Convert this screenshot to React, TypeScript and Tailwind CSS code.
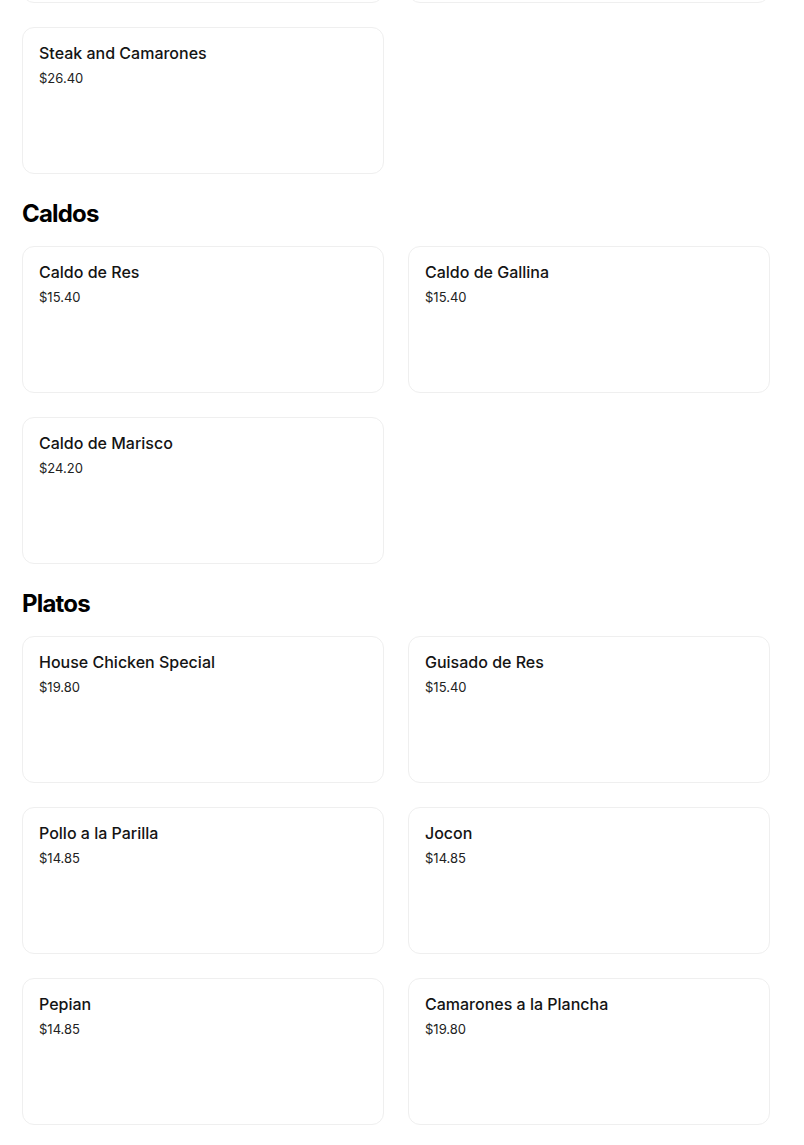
import React from 'react';

interface MenuItem {
  name: string;
  price: string;
}

interface Section {
  title: string;
  items: MenuItem[];
}

const sections: Section[] = [
  {
    title: 'Caldos',
    items: [
      { name: 'Caldo de Res', price: '$15.40' },
      { name: 'Caldo de Gallina', price: '$15.40' },
      { name: 'Caldo de Marisco', price: '$24.20' },
    ],
  },
  {
    title: 'Platos',
    items: [
      { name: 'House Chicken Special', price: '$19.80' },
      { name: 'Guisado de Res', price: '$15.40' },
      { name: 'Pollo a la Parilla', price: '$14.85' },
      { name: 'Jocon', price: '$14.85' },
      { name: 'Pepian', price: '$14.85' },
      { name: 'Camarones a la Plancha', price: '$19.80' },
    ],
  },
];

const cardClass = 'h-[147px] rounded-xl border border-[#efefef] bg-white px-4 pt-[15px]';

function ItemCard({ item }: { item: MenuItem }) {
  return (
    <div className={cardClass}>
      <h3 className="text-base leading-5 font-medium text-[#141414]">{item.name}</h3>
      <p className="mt-[5px] text-[13px] leading-5 text-[#222]">{item.price}</p>
    </div>
  );
}

export default function App() {
  return (
    <div
      className="h-[1145px] overflow-hidden bg-white px-[22px]"
      style={{ fontFamily: 'Inter, "Noto Sans", sans-serif' }}
    >
      {/* tail of the previous section, scrolled mostly out of view */}
      <div className="-mt-[144px] grid w-[748px] grid-cols-2 gap-6">
        <div className={cardClass} />
        <div className={cardClass} />
        <ItemCard item={{ name: 'Steak and Camarones', price: '$26.40' }} />
      </div>

      {sections.map(section => (
        <section key={section.title}>
          <h2 className="mt-[24px] mb-[16px] h-8 text-2xl leading-8 font-bold tracking-[-0.8px] text-black">
            {section.title}
          </h2>
          <div className="grid w-[748px] grid-cols-2 gap-6">
            {section.items.map(item => (
              <ItemCard key={item.name} item={item} />
            ))}
          </div>
        </section>
      ))}
    </div>
  );
}
